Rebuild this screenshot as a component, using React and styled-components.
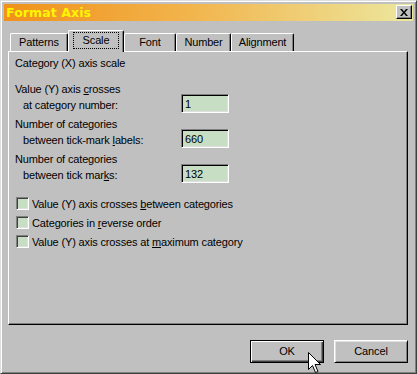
import React from "react";
import styled, { createGlobalStyle, css } from "styled-components";

const Global = createGlobalStyle`
  html, body { margin: 0; padding: 0; background: #c0c0c0; }
  body { font-family: "Liberation Sans", Arial, sans-serif; }
`;

const Window = styled.div`
  position: relative;
  width: 417px;
  height: 374px;
  box-sizing: border-box;
  background: #c0c0c0;
  border: 1px solid;
  border-color: #dfdfdf #404040 #404040 #dfdfdf;
  box-shadow: inset 1px 1px #ffffff, inset -1px -1px #808080;
  padding: 3px;
  overflow: hidden;
  font-family: "Liberation Sans", Arial, sans-serif;
  font-size: 11px;
  letter-spacing: -0.15px;
  color: #000;
`;

const TitleBar = styled.div`
  height: 17px;
  display: flex;
  align-items: flex-start;
  justify-content: space-between;
  padding: 0 1px 0 2px;
  background: linear-gradient(to right, #f0911a 0%, #f2b44c 45%, #ece79e 100%);
`;

const TitleText = styled.div`
  font-family: "DejaVu Sans", Verdana, sans-serif;
  font-weight: bold;
  font-size: 12.5px;
  letter-spacing: 0.1px;
  line-height: 17px;
  color: #fff400;
`;

const CloseButton = styled.div`
  width: 16px;
  height: 14px;
  margin-top: 1px;
  box-sizing: border-box;
  background: #c0c0c0;
  border: 1px solid;
  border-color: #ffffff #000000 #000000 #ffffff;
  box-shadow: inset -1px -1px #808080;
  display: flex;
  align-items: center;
  justify-content: center;
`;

const Body = styled.div`
  padding: 9px 5px 0 4px;
`;

const TabRow = styled.div`
  display: flex;
  align-items: flex-end;
  height: 21px;
  padding-left: 2px;
`;

const Tab = styled.div`
  box-sizing: border-box;
  width: ${(p) => p.$w}px;
  height: 18px;
  background: #c0c0c0;
  border-top: 1px solid #ffffff;
  border-left: 1px solid #ffffff;
  border-right: 1px solid #000000;
  border-radius: 2px 2px 0 0;
  box-shadow: inset -1px 0 #808080;
  display: flex;
  justify-content: center;
  align-items: flex-start;
  padding-top: 2px;
  line-height: 13px;
  ${(p) =>
    p.$active &&
    css`
      position: relative;
      z-index: 1;
      height: 22px;
      margin-bottom: -1px;
      padding-top: 1px;
    `}
`;

const FocusLabel = styled.span`
  box-sizing: border-box;
  width: 46px;
  height: 17px;
  border: 1px dotted #000;
  display: flex;
  align-items: center;
  justify-content: center;
  padding-bottom: 1px;
`;

const Panel = styled.div`
  box-sizing: border-box;
  width: 400px;
  height: 274px;
  border: 1px solid;
  border-color: #ffffff #000000 #000000 #ffffff;
  box-shadow: inset -1px -1px #808080;
  padding: 5px 6px;
`;

const Heading = styled.div`
  line-height: 13px;
`;

const Group = styled.div`
  display: grid;
  grid-template-columns: 166px 48px;
  grid-template-rows: 16px 16px;
  margin-top: ${(p) => p.$mt}px;
`;

const Line = styled.div`
  line-height: 16px;
  white-space: nowrap;
  grid-column: 1;
  padding-left: ${(p) => (p.$indent ? 8 : 0)}px;
`;

const Field = styled.div`
  grid-column: 2;
  grid-row: 1 / span 2;
  align-self: end;
  box-sizing: border-box;
  height: 19px;
  background: #c8dec4;
  border: 1px solid;
  border-color: #808080 #ffffff #ffffff #808080;
  box-shadow: inset 1px 1px #000000, inset -1px -1px #dfdfdf;
  padding: 2px 0 0 3px;
  line-height: 15px;
`;

const Key = styled.span`
  text-decoration: underline;
  text-underline-offset: 1px;
`;

const CheckList = styled.div`
  margin-top: 11px;
  display: flex;
  flex-direction: column;
`;

const CheckRow = styled.div`
  height: 19px;
  display: flex;
  align-items: center;
  gap: 3px;
`;

const Box = styled.div`
  box-sizing: border-box;
  width: 13px;
  height: 13px;
  margin-left: 1px;
  background: #c8dec4;
  border: 1px solid;
  border-color: #808080 #ffffff #ffffff #808080;
  box-shadow: inset 1px 1px #404040, inset -1px -1px #dfdfdf;
`;

const CheckLabel = styled.span`
  line-height: 13px;
  padding-top: 2px;
  white-space: nowrap;
`;

const ButtonRow = styled.div`
  display: flex;
  justify-content: flex-end;
  gap: 10px;
  margin-top: 15px;
  width: 400px;
`;

const Button = styled.div`
  box-sizing: border-box;
  width: 74px;
  height: 23px;
  background: #c0c0c0;
  display: flex;
  align-items: center;
  justify-content: center;
  line-height: 13px;
  border: 1px solid;
  ${(p) =>
    p.$default
      ? css`
          border-color: #000;
          box-shadow: inset 1px 1px #ffffff, inset -1px -1px #404040,
            inset -2px -2px #808080;
        `
      : css`
          border-color: #ffffff #000000 #000000 #ffffff;
          box-shadow: inset 1px 1px #dfdfdf, inset -1px -1px #808080;
        `}
`;

const Cursor = styled.svg`
  position: absolute;
  left: 307px;
  top: 351px;
`;

export default function App() {
  return (
    <>
      <Global />
      <Window>
        <TitleBar>
          <TitleText>Format Axis</TitleText>
          <CloseButton>
            <svg width="8" height="7" viewBox="0 0 8 7">
              <path d="M0 0 L2 0 L4 2.5 L6 0 L8 0 L5 3.5 L8 7 L6 7 L4 4.5 L2 7 L0 7 L3 3.5 Z" fill="#000" />
            </svg>
          </CloseButton>
        </TitleBar>
        <Body>
          <TabRow>
            <Tab $w={58}>Patterns</Tab>
            <Tab $w={56} $active>
              <FocusLabel>Scale</FocusLabel>
            </Tab>
            <Tab $w={52}>Font</Tab>
            <Tab $w={55}>Number</Tab>
            <Tab $w={63}>Alignment</Tab>
          </TabRow>
          <Panel>
            <Heading>Category (X) axis scale</Heading>
            <Group $mt={11}>
              <Line>
                Value (Y) axis <Key>c</Key>rosses
              </Line>
              <Line $indent>at category number:</Line>
              <Field>1</Field>
            </Group>
            <Group $mt={3}>
              <Line>Number of categories</Line>
              <Line $indent>
                between tick-mark <Key>l</Key>abels:
              </Line>
              <Field>660</Field>
            </Group>
            <Group $mt={3}>
              <Line>Number of categories</Line>
              <Line $indent>
                between tick mar<Key>k</Key>s:
              </Line>
              <Field>132</Field>
            </Group>
            <CheckList>
              <CheckRow>
                <Box />
                <CheckLabel>
                  Value (Y) axis crosses <Key>b</Key>etween categories
                </CheckLabel>
              </CheckRow>
              <CheckRow>
                <Box />
                <CheckLabel>
                  Categories in <Key>r</Key>everse order
                </CheckLabel>
              </CheckRow>
              <CheckRow>
                <Box />
                <CheckLabel>
                  Value (Y) axis crosses at <Key>m</Key>aximum category
                </CheckLabel>
              </CheckRow>
            </CheckList>
          </Panel>
          <ButtonRow>
            <Button $default>OK</Button>
            <Button>Cancel</Button>
          </ButtonRow>
        </Body>
        <Cursor width="14" height="24" viewBox="0 0 14 24">
          <path
            d="M0.5 0.5 L0.5 17.5 L4.5 13.5 L7.5 20.5 L10 19.5 L7 12.5 L12.5 12.5 Z"
            fill="#fff"
            stroke="#000"
            strokeWidth="1"
          />
        </Cursor>
      </Window>
    </>
  );
}
